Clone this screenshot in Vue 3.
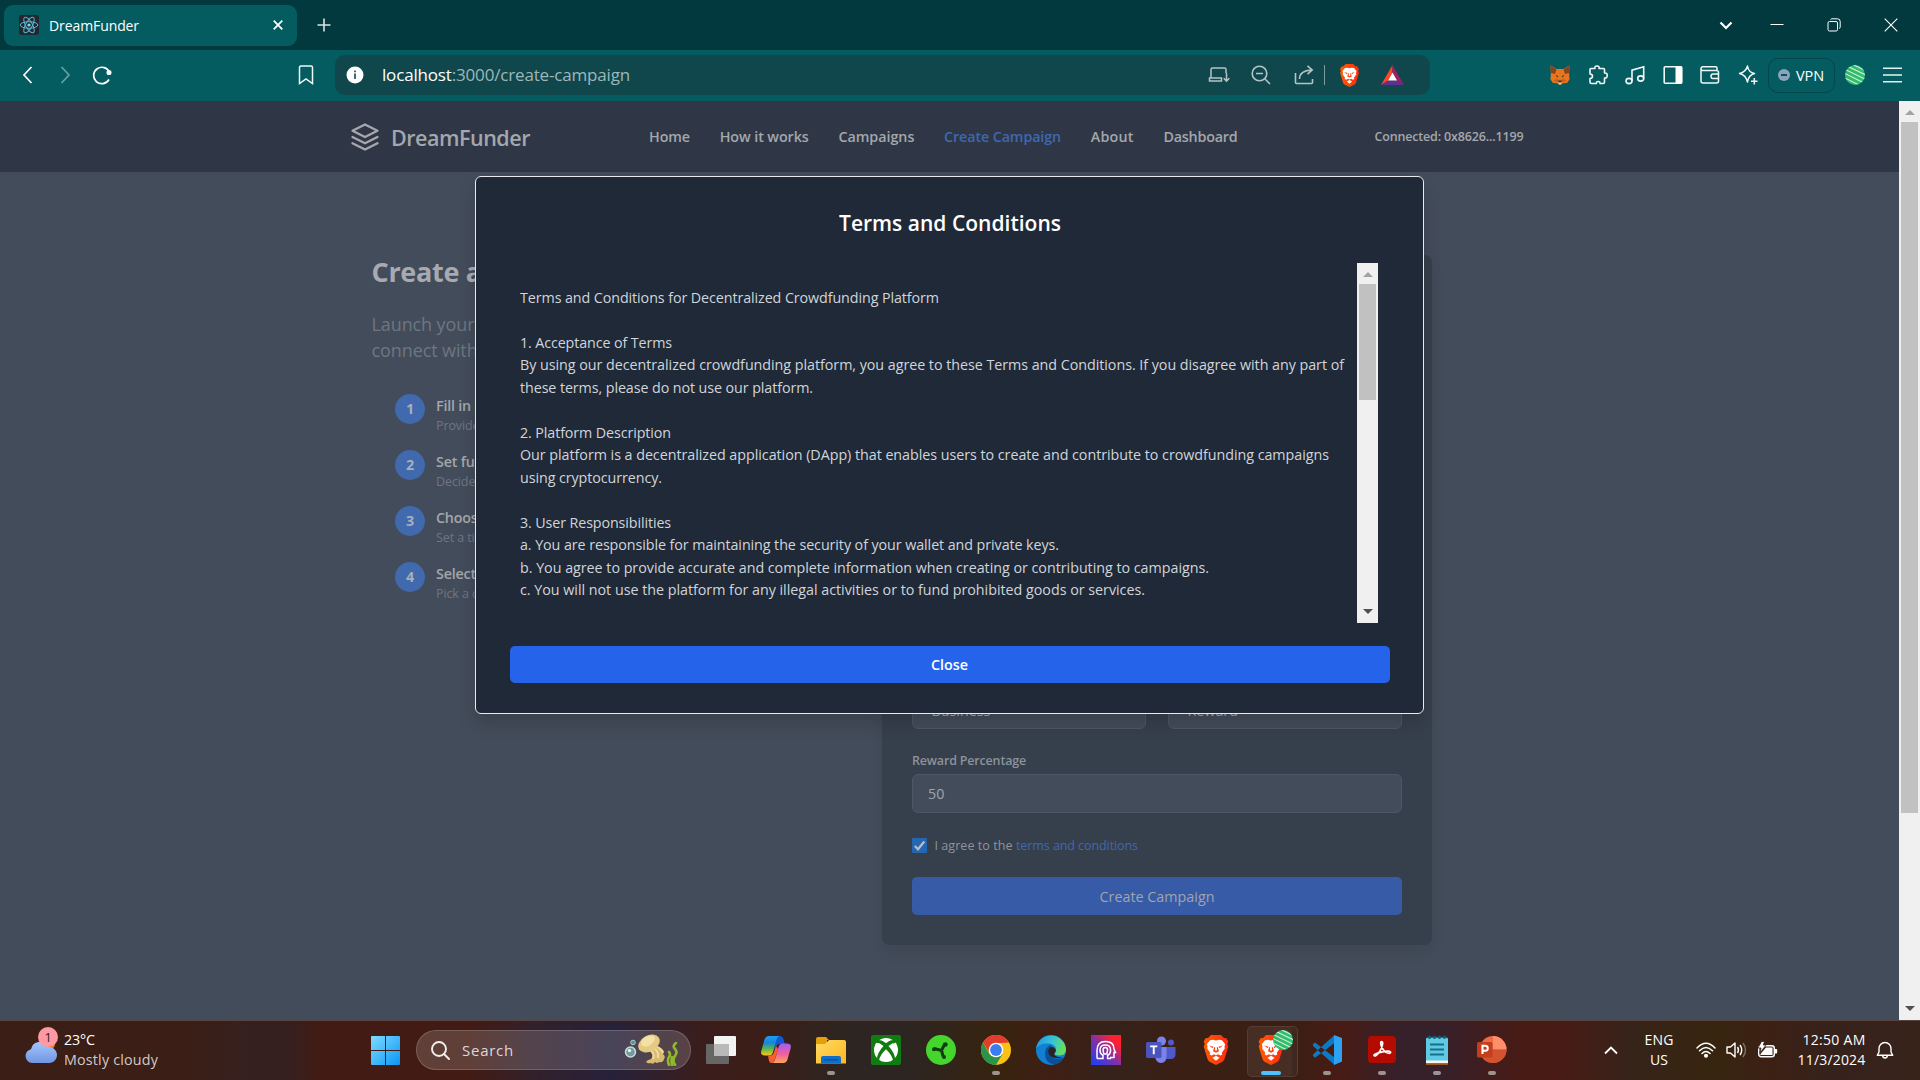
<script setup>
// Spreads the letters of a line so that it fills the given width.
const vFit = {
  mounted(el, { value }) {
    if (!value) return
    const natural = el.getBoundingClientRect().width
    el.style.letterSpacing = (value - natural) / el.textContent.length + 'px'
  }
}

const nav = [
  { label: 'Home', w: 41 },
  { label: 'How it works', w: 89 },
  { label: 'Campaigns', w: 76 },
  { label: 'Create Campaign', w: 117, active: true },
  { label: 'About', w: 43 },
  { label: 'Dashboard', w: 74 }
]

const steps = [
  { title: 'Fill in', sub: 'Provide' },
  { title: 'Set fun', sub: 'Decide' },
  { title: 'Choose', sub: 'Set a tim' },
  { title: 'Select', sub: 'Pick a c' }
]

const terms = [
  ['Terms and Conditions for Decentralized Crowdfunding Platform', 419],
  ['', 0],
  ['1. Acceptance of Terms', 152],
  ['By using our decentralized crowdfunding platform, you agree to these Terms and Conditions. If you disagree with any part of', 824],
  ['these terms, please do not use our platform.', 293],
  ['', 0],
  ['2. Platform Description', 151],
  ['Our platform is a decentralized application (DApp) that enables users to create and contribute to crowdfunding campaigns', 809],
  ['using cryptocurrency.', 142],
  ['', 0],
  ['3. User Responsibilities', 151],
  ['a. You are responsible for maintaining the security of your wallet and private keys.', 539],
  ['b. You agree to provide accurate and complete information when creating or contributing to campaigns.', 689],
  ['c. You will not use the platform for any illegal activities or to fund prohibited goods or services.', 625]
]

const apps = [
  { id: 'taskview' }, { id: 'copilot' }, { id: 'folder', run: true }, { id: 'xbox' },
  { id: 'razer' }, { id: 'chrome', run: true }, { id: 'edge' }, { id: 'mystic' },
  { id: 'teams' }, { id: 'brave' }, { id: 'brave', active: true }, { id: 'vscode', run: true },
  { id: 'acrobat', run: true }, { id: 'notepad', run: true }, { id: 'ppt', run: true }
]
</script>

<template>
  <div class="screen">
    <svg class="defs" width="0" height="0">
      <defs>
        <linearGradient id="gBrave" x1="0" x2="1"><stop offset="0" stop-color="#ff5a00" /><stop offset="1" stop-color="#ff2b12" /></linearGradient>
        <linearGradient id="gWin" x1="0" y1="0" x2="1" y2="1"><stop offset="0" stop-color="#7fdcff" /><stop offset="1" stop-color="#0a96f5" /></linearGradient>
        <linearGradient id="gCopA" x1="0" y1="0" x2="0" y2="1"><stop offset="0" stop-color="#1f9cf0" /><stop offset=".35" stop-color="#1486dc" /><stop offset=".65" stop-color="#58b64c" /><stop offset="1" stop-color="#ffc51c" /></linearGradient>
        <linearGradient id="gCopB" x1="0" y1="0" x2="0" y2="1"><stop offset="0" stop-color="#a05cf5" /><stop offset=".55" stop-color="#f0609a" /><stop offset="1" stop-color="#ffa45c" /></linearGradient>
        <linearGradient id="gFold" x1="0" y1="0" x2="1" y2="1"><stop offset="0" stop-color="#ffda64" /><stop offset="1" stop-color="#fdb81e" /></linearGradient>
        <linearGradient id="gMys" x1="0" y1="1" x2="1" y2="0"><stop offset="0" stop-color="#1440ff" /><stop offset=".5" stop-color="#8a2fa0" /><stop offset=".8" stop-color="#ff2030" /></linearGradient>
        <linearGradient id="gEdge" x1="0" y1=".3" x2="1" y2=".5"><stop offset="0" stop-color="#229bdc" /><stop offset=".5" stop-color="#34c1d8" /><stop offset="1" stop-color="#6ae05a" /></linearGradient>
        <linearGradient id="gCloud" x1="0" y1="0" x2="0" y2="1"><stop offset="0" stop-color="#a4c6fa" /><stop offset="1" stop-color="#7196e4" /></linearGradient>
        <linearGradient id="gBall" x1="0" x2="1"><stop offset="0" stop-color="#35b56a" /><stop offset="1" stop-color="#2fc46e" /></linearGradient>
        <clipPath id="cBall"><circle cx="10" cy="10" r="10" /></clipPath>
        <symbol id="i-brave" viewBox="0 0 30 30">
          <path fill="url(#gBrave)" d="M10 0h10l3 3 2.500.3 1.800 3.400-1 2.300 1 2.500-3.800 12.500q-.6 1.700-2 2.700L15 30l-6.500-3.300q-1.400-1-2-2.700L2.700 11.500l1-2.500-1-2.300 1.800-3.400L7 3z" />
          <path fill="#fff" d="M15 5.500l3-.7 3 .4 3.200 4-.7 2.300.3 2.100-3 4.200.5 1.700-2 1-2.200-1.200-2.100 1-2.100-1-2.200 1.200-2-1 .5-1.700-3-4.200.3-2.100-.7-2.300 3.200-4 3-.4z" />
          <path fill="#fff" d="M15 20.800l3.500 1.900L15 25.800l-3.500-3.100z" />
          <path fill="#ff4314" d="M8 10.500l4.500 1.200-.8 1.600zM22 10.500l-4.500 1.200.8 1.600zM15 17.700l-3-1.500 1.300-4.200.9.200L14 15.600h2l-.2-3.400.9-.2 1.300 4.200z" />
        </symbol>
        <symbol id="i-ball" viewBox="0 0 20 20">
          <circle cx="10" cy="10" r="10" fill="url(#gBall)" />
          <g clip-path="url(#cBall)" stroke="#d5f3dd" stroke-width="1.100"><path d="M5-2l18 9M2 1l20 9.500M0 4.500l20 9.500M-1 8l20 10M-2 12l18 9" /></g>
        </symbol>
        <symbol id="i-taskview" viewBox="0 0 30 30"><rect x="0" y="9" width="23" height="20" rx="1" fill="#666" /><rect x="8" y="1" width="22" height="20" rx="1" fill="#f3f3f3" /><path d="M8 9h15v12H8z" fill="#b9b9b9" /></symbol>
        <symbol id="i-copilot" viewBox="0 0 30 30">
          <path fill="#1457d6" d="M14 1h5q2.500 0 3.200 2.500L24 9h-5q-3 0-4 3l-1.500 4z" />
          <path fill="url(#gCopA)" d="M8 1h11q-2.500 0-3.500 3.500L12 17q-1 3.500-4 3.500H4Q-.8 20.500.3 16L3.500 4.500Q4.600 1 8 1z" />
          <path fill="#f4602c" d="M7 20.500h2q3 0 4-3.500l2-6 2 3-3 10q-1.200 4-3.500 4-2 0-2.600-2.500z" />
          <path fill="url(#gCopB)" d="M22 28H10.500q2.500 0 3.500-3.500L17.500 12q1-3.500 4-3.500H26q4.800 0 3.700 4.500L26.500 24.500Q25.400 28 22 28z" />
        </symbol>
        <symbol id="i-folder" viewBox="0 0 30 30"><path fill="#e3a008" d="M0 4q0-2 2-2h8l3 3h-2v5H0z" /><path fill="url(#gFold)" d="M0 9h9l4-4h15q2 0 2 2v21.500H0z" /><path fill="#0f6fc8" d="M5 28.500V23q0-2 2-2h16q2 0 2 2v5.500z" /><path stroke="#0a4c92" stroke-width="1.200" d="M8 24.800h14" /></symbol>
        <symbol id="i-xbox" viewBox="0 0 30 30"><rect width="30" height="30" rx="2" fill="#107c10" /><circle cx="15" cy="15" r="12" fill="#fff" /><path fill="#107c10" d="M6.800 5.200Q10 4.500 15 8.200q5-3.700 8.200-3L25 7l-2 1.500-1.500-.2-4 2.700q6 6.500 6.700 13.200L22 25.500Q21 20 15 14.300 9 20 8 25.500l-2.200-1.300Q6.500 17.500 12.500 11l-4-2.700L5.500 8 5 7z" /></symbol>
        <symbol id="i-razer" viewBox="0 0 30 30"><circle cx="15" cy="15" r="15" fill="#44d62c" /><path d="M15.500 15.500l3.500-7M15.500 15.500L8 13.500M15.500 15.500l1.700 6" stroke="#133d10" stroke-width="3" /><circle cx="19.500" cy="9.500" r="2.200" fill="#133d10" /><circle cx="8" cy="14.300" r="2" fill="#133d10" /><circle cx="18" cy="22" r="2" fill="#133d10" /></symbol>
        <symbol id="i-chrome" viewBox="0 0 30 30"><circle cx="15" cy="15" r="15" fill="#fbc116" /><path fill="#e33b2e" d="M2 7.500A15 15 0 0 1 28 7.500L15 8.200l-6.300 10z" /><path fill="#2a9447" d="M2 7.500A15 15 0 0 0 15 30l6.500-11-13 .2z" /><circle cx="15" cy="15" r="7.300" fill="#fff" /><circle cx="15" cy="15" r="5.900" fill="#3b7ded" /></symbol>
        <symbol id="i-edge" viewBox="0 0 30 30"><circle cx="15" cy="15" r="15" fill="#117fd3" /><path fill="url(#gEdge)" d="M.2 13.500A15 15 0 0 1 30 14q0 6.500-6.500 6.500-5 0-5-2.200 1.500-1.300 1.500-3.300 0-5.500-7-6.500Q4 7.800.2 13.500z" /><path fill="#0b4f99" d="M15 10q-6 2-6 9 0 9 9 10.600 6.500-1.300 9.800-7.100-11 4-14-3.500-1-4.500 3-5.500z" /><path fill="#2c211d" d="M15.500 12q-4 1.500-3 6 1 3.500 5.500 4.800 5 1 9.300-1-3.500.5-6.800-.4-3-1-2-3.200 1.700-1.300 1.200-3.400-1-2.800-4.200-2.800z" /></symbol>
        <symbol id="i-mystic" viewBox="0 0 30 30"><path fill="url(#gMys)" d="M0 0h30v30H0z" /><g fill="none" stroke="#fff" stroke-width="1.500"><path d="M6 23.500v-8Q6 6.500 14.500 6.500T23 14l1.500 3.500H23v5h-4" /><path d="M9 23.500h3v-3q-3-1.700-3-5.300 0-5.200 5.300-5.200t5.300 5.200q0 3.600-3 5.300v3h3.500M6 23.500h3" /><path d="M14.300 12.500q-2.300 0-2.300 2.500l.8 4h3l.8-4q0-2.500-2.300-2.500z" /></g></symbol>
        <symbol id="i-teams" viewBox="0 0 30 30"><circle cx="15.500" cy="6" r="4.500" fill="#7b83eb" /><circle cx="25" cy="7.500" r="3" fill="#5059c9" /><path fill="#5059c9" d="M20 12h9.500v7q0 5-5 5H20z" /><path fill="#7b83eb" d="M9 12h11.500v9q0 7-5.500 7T9 20z" /><rect x="0" y="7" width="15.500" height="16" rx="1.500" fill="#4b53bc" /><path stroke="#fff" stroke-width="1.900" d="M4.200 11.400h7.100M7.750 11.400v7.800" /></symbol>
        <symbol id="i-vscode" viewBox="0 0 30 30"><path fill="#0a7ac4" d="M1 9l2-1.500 19 14.500 .5 8L1 11zM1 19.500v1.500l2 1.800L22.500 8V0L1 19.500z" /><path fill="#2ba3f0" d="M22 0l8 3v23.500L22 30z" /></symbol>
        <symbol id="i-acrobat" viewBox="0 0 30 30"><rect x="1" y="1" width="28" height="27" rx="4" fill="#b30b00" /><path fill="none" stroke="#fff" stroke-width="1.700" d="M7 20.500c-1-2 15-6 16.500-3.500 1 2-4 2-7-2S13 6.500 14.700 6.500c2 0 .5 6-1.700 9.500S8 22 7 20.500z" /></symbol>
        <symbol id="i-notepad" viewBox="0 0 30 30"><rect x="4" y="2.500" width="22" height="25" rx="1.500" fill="#5fcbe2" /><path fill="#f5f5f5" d="M4 25.500h22v2.500H4z" /><path fill="#b8660f" d="M4 28h22v1.800H4z" /><path stroke="#1a6f8c" stroke-width="1.900" d="M8 9.500h14M8 14.500h14M8 19.500h14" /><g fill="#0f5f7c"><circle cx="7.500" cy="2.200" r="1.700" /><circle cx="12.500" cy="2.200" r="1.700" /><circle cx="17.500" cy="2.200" r="1.700" /><circle cx="22.500" cy="2.200" r="1.700" /></g></symbol>
        <symbol id="i-ppt" viewBox="0 0 30 30"><circle cx="16" cy="14.500" r="13.500" fill="#ed6c47" /><path fill="#ff8f6b" d="M16 1a13.500 13.500 0 0 1 13.500 13.500H16z" /><path fill="#d35230" d="M29.500 14.500a13.500 13.500 0 0 1-27 0z" /><rect x="0" y="7" width="15.500" height="15.500" rx="1.500" fill="#c43e1c" /><path fill="none" stroke="#fff" stroke-width="2" d="M5.500 19v-8.200h2.800a2.500 2.500 0 0 1 0 5H5.500" /></symbol>
      </defs>
    </svg>

    <!-- Browser title bar -->
    <div class="titlebar">
      <div class="tab">
        <svg class="favicon" width="20" height="20" viewBox="0 0 20 20"><rect width="20" height="20" rx="2.500" fill="#23272f" /><g fill="none" stroke="#58b9d3" stroke-width="1"><ellipse cx="10" cy="10" rx="8.800" ry="3.300" /><ellipse cx="10" cy="10" rx="8.800" ry="3.300" transform="rotate(60 10 10)" /><ellipse cx="10" cy="10" rx="8.800" ry="3.300" transform="rotate(120 10 10)" /></g><circle cx="10" cy="10" r="1.600" fill="#7bdcf2" /></svg>
        <span class="tabname" v-fit="90">DreamFunder</span>
        <svg width="10" height="10" viewBox="0 0 10 10" stroke="#fff" stroke-width="1.700"><path d="M.7.7l8.600 8.600M9.300.7L.7 9.300" /></svg>
      </div>
      <svg class="plus" width="14" height="14" viewBox="0 0 14 14" stroke="#d9e4e5" stroke-width="1.600"><path d="M7 .5v13M.5 7h13" /></svg>
      <div class="winctl">
        <svg width="14" height="14" viewBox="0 0 14 14" fill="none" stroke="#fff" stroke-width="2.200"><path d="M1.500 4.500L7 10l5.500-5.500" /></svg>
        <svg width="14" height="14" viewBox="0 0 14 14" stroke="#fff" stroke-width="1"><path d="M.5 6.500h13" /></svg>
        <svg width="14" height="14" viewBox="0 0 14 14" fill="none" stroke="#fff" stroke-width="1"><rect x="1" y="3.500" width="9.500" height="9.500" rx="1.500" /><path d="M3.500 1.500Q4 .8 5 .8h5.500q2.700 0 2.700 2.700V9q0 1-1 1.500" /></svg>
        <svg width="14" height="14" viewBox="0 0 14 14" stroke="#fff" stroke-width="1.100"><path d="M.7.700l12.600 12.600M13.300.7L.7 13.300" /></svg>
      </div>
    </div>

    <!-- Browser toolbar -->
    <div class="toolbar">
      <div class="navs">
        <svg width="12" height="18" viewBox="0 0 12 18" fill="none" stroke="#fff" stroke-width="1.700"><path d="M9.500 1L2 9l7.500 8" /></svg>
        <svg width="12" height="18" viewBox="0 0 12 18" fill="none" stroke="#6ba0a3" stroke-width="1.700"><path d="M2.500 1L10 9l-7.500 8" /></svg>
        <svg width="20" height="20" viewBox="0 0 20 20" fill="none" stroke="#fff" stroke-width="1.700"><path d="M17.500 7.500A8.200 8.200 0 1 0 17 14.500" /><circle cx="17" cy="7.500" r="1.700" fill="#fff" /></svg>
      </div>
      <svg class="bm" width="16" height="20" viewBox="0 0 16 20" fill="none" stroke="#f2f7f7" stroke-width="1.500"><path d="M1.500 2.500q0-1.500 1.500-1.500h10q1.500 0 1.500 1.500V18.500L8 14l-6.500 4.500z" /></svg>
      <div class="urlbar">
        <svg width="18" height="18" viewBox="0 0 18 18"><circle cx="9" cy="9" r="8.500" fill="#fff" /><path d="M9 7.500V13M9 4.500V6.300" stroke="#10474c" stroke-width="1.600" /></svg>
        <span class="url" v-fit="248"><b>localhost</b>:3000/create-campaign</span>
        <div class="urlicons">
          <svg width="22" height="20" viewBox="0 0 22 20" fill="none" stroke="#b3c4c6" stroke-width="1.500"><path d="M3 12.500V4.500Q3 3 4.500 3h12Q18 3 18 4.500V8M1.500 13h12v3h-12zM18.500 8v8M15.700 13.200l2.800 2.900 2.800-2.900" /></svg>
          <svg width="20" height="20" viewBox="0 0 20 20" fill="none" stroke="#b3c4c6" stroke-width="1.600"><circle cx="8.500" cy="8.500" r="7.300" /><path d="M14 14l5 5M5 8.500h7" /></svg>
          <svg width="20" height="20" viewBox="0 0 20 20" fill="none" stroke="#b3c4c6" stroke-width="1.600"><path d="M1.500 8v9.500q0 1 1 1h15q1 0 1-1V14M5.500 14q0-8.500 12.500-9M13.500.8L18.200 5l-4.700 4.200" /></svg>
          <i class="sep"></i>
          <svg width="23" height="23"><use href="#i-brave" /></svg>
          <svg width="23" height="20" viewBox="0 0 23 20"><path fill="#ff4724" d="M11.500 0L0 20l7-4.500 4.500-8z" /><path fill="#9e1f63" d="M11.500 0L23 20l-7-4.500-4.500-8z" /><path fill="#662d91" d="M0 20h23l-7-4.500H7z" /><path fill="#fff" d="M11.500 7.500L16 15.500H7z" /></svg>
        </div>
      </div>
      <div class="ext">
        <svg width="20" height="20" viewBox="0 0 20 20"><path fill="#e8761c" d="M.5.500l6 3.500h7l6-3.500-.4 8 .4 6-2.500 3.500-4.500.3-1 1.200h-3l-1-1.200-4.500-.3L.5 14.500l.4-6z" /><path fill="#8a4320" d="M.5.500l6 4L5 9 1 8zM19.500.5l-6 4L15 9l4-1z" /><path fill="#c95e14" d="M4 15l4-1 1 2-4 1zM16 15l-4-1-1 2 4 1z" /><path fill="#2c3a45" d="M5.500 10l2.700 1-.7 1.500zM14.500 10l-2.700 1 .7 1.500zM8.500 15.500h3l.5 2H8z" /><path fill="#d9c3ae" d="M8 17.500h4l-.8 2H8.800z" /></svg>
        <svg width="20" height="20" viewBox="0 0 20 20" fill="none" stroke="#eff7f7" stroke-width="1.600" stroke-linejoin="round"><path d="M2 4.500q0-1 1-1h4Q6.200 1 9 1t2 2.500h4.500q1 0 1 1V8Q19.200 7.500 19.200 10.500T16.500 13v4q0 1.500-1.500 1.500h-3q.3-2-1.800-2T8.400 18.500H3.500Q2 18.500 2 17v-3.500q2.500 0 2.500-2.200T2 9z" /></svg>
        <svg width="20" height="20" viewBox="0 0 20 20" fill="none" stroke="#eff7f7" stroke-width="1.600"><ellipse cx="4" cy="16" rx="3" ry="2.600" /><ellipse cx="15.700" cy="13.500" rx="3" ry="2.600" /><path d="M7 16V5.200l11.700-3.500v11.800" /></svg>
        <svg width="20" height="20" viewBox="0 0 20 20"><rect x="1.200" y="1.800" width="17.600" height="16.400" rx="1" fill="none" stroke="#eff7f7" stroke-width="1.600" /><path fill="#fff" d="M12.500 1.500H19v17h-6.500z" /></svg>
        <svg width="20" height="20" viewBox="0 0 20 20" fill="none" stroke="#eff7f7" stroke-width="1.500"><path d="M17 5.500V3q0-1.200-1.200-1.200H3Q1 1.800 1 3.700V16q0 2 2 2h13.500q2 0 2-2V7.500q0-2-2-2H3Q1 5.500 1 3.700M18.500 9H13q-2 0-2 2.300t2 2.300h5.500" /></svg>
        <svg width="20" height="20" viewBox="0 0 20 20" fill="none" stroke="#eff7f7" stroke-width="1.500" stroke-linejoin="round"><path d="M9.500 1q1 6.500 7 7.500-6 1.500-7 8.500-1.500-7-8-8.500 6.500-1.500 8-7.500z" /><path d="M16.300 13v6.500M13 16.200h6.500" /></svg>
      </div>
      <div class="vpn"><i></i><span v-fit="28">VPN</span></div>
      <svg class="ball" width="20" height="20"><use href="#i-ball" /></svg>
      <svg width="19" height="16" viewBox="0 0 19 16" stroke="#e6f2f2" stroke-width="1.500"><path d="M0 1.200h19M0 8h19M0 14.800h19" /></svg>
    </div>

    <!-- Web page -->
    <div class="viewport">
      <div class="page">
        <header class="header">
          <svg width="30" height="30" viewBox="0 0 24 24" fill="none" stroke="#a6a8ad" stroke-width="1.800" stroke-linecap="round" stroke-linejoin="round"><path d="M12 2L2 7l10 5 10-5-10-5zM2 17l10 5 10-5M2 12l10 5 10-5" /></svg>
          <span class="brand" v-fit="139">DreamFunder</span>
          <nav class="nav">
            <a v-for="n in nav" :key="n.label" :class="{ on: n.active }"><span v-fit="n.w">{{ n.label }}</span></a>
          </nav>
          <span class="wallet" v-fit="149">Connected: 0x8626...1199</span>
        </header>

        <main class="main">
          <section class="intro">
            <h1>Create a</h1>
            <p>Launch your<br />connect with</p>
            <ul>
              <li v-for="(s, i) in steps" :key="s.title">
                <span class="num">{{ i + 1 }}</span>
                <div><b>{{ s.title }}</b><small>{{ s.sub }}</small></div>
              </li>
            </ul>
          </section>
          <form class="card">
            <div class="pair"><div class="field">Business</div><div class="field">Reward</div></div>
            <label><span v-fit="114">Reward Percentage</span></label>
            <div class="field">50</div>
            <div class="agree">
              <svg width="15" height="15" viewBox="0 0 15 15"><rect width="15" height="15" rx="1" fill="#2566b2" /><path d="M2.800 8l3.200 3.200 6.300-7.600" fill="none" stroke="#b5bcc6" stroke-width="2.300" /></svg>
              <span v-fit="78">I agree to the</span>
              <a v-fit="122">terms and conditions</a>
            </div>
            <div class="submit"><span v-fit="115">Create Campaign</span></div>
          </form>
        </main>

        <div class="modal">
          <h2><span v-fit="222">Terms and Conditions</span></h2>
          <div class="scrollbox">
            <div class="terms">
              <p v-for="(t, i) in terms" :key="i"><span v-fit="t[1]">{{ t[0] }}</span></p>
            </div>
            <div class="sb"><i class="up"></i><i class="thumb"></i><i class="down"></i></div>
          </div>
          <div class="close"><span v-fit="37">Close</span></div>
        </div>
      </div>
      <div class="sb"><i class="up"></i><i class="thumb"></i><i class="down"></i></div>
    </div>

    <!-- Taskbar -->
    <div class="taskbar">
      <div class="weather">
        <svg width="34" height="40" viewBox="0 0 34 40"><circle cx="25" cy="17" r="6" fill="#f57c1c" /><path fill="url(#gCloud)" d="M8 36a7 7 0 0 1-1-13.800A9 9 0 0 1 24 20a8 8 0 0 1 2 16z" /><circle cx="24" cy="10" r="10" fill="#ff99a4" /><text x="24" y="15" text-anchor="middle">1</text></svg>
        <div><span class="deg" v-fit="31">23°C</span><span v-fit="94">Mostly cloudy</span></div>
      </div>
      <svg class="win" width="29" height="29" viewBox="0 0 29 29"><path fill="url(#gWin)" d="M1 0h13v14H0V1q0-1 1-1zM15 0h13q1 0 1 1v13H15zM0 15h14v14H1q-1 0-1-1zM15 15h14v13q0 1-1 1H15z" /></svg>
      <div class="search">
        <svg width="19" height="19" viewBox="0 0 19 19" fill="none" stroke="#f3eeee" stroke-width="1.900"><circle cx="8" cy="8" r="7" /><path d="M13 13l5 5" stroke-linecap="round" /></svg>
        <span v-fit="52">Search</span>
        <svg class="art" width="56" height="32" viewBox="0 0 56 32">
          <circle cx="6.500" cy="18" r="5" fill="#789a9f" stroke="#bfe0d8" stroke-width="1.500" /><circle cx="5.500" cy="16.500" r="1.600" fill="#e8ffff" /><circle cx="9" cy="8.500" r="2.300" fill="#608c94" stroke="#a9d0cc" />
          <path fill="#d9ba70" d="M26 16q5 6 1 9-4 1-5 3 2 2 5 1 2 2 4-1 2 2 4 0 4 1 5-3 2-2-1-5 2-4-2-5l-4-3z" /><path stroke="#f0dc9a" stroke-width="2" fill="none" d="M26 16q5 4 3 9M30 14q5 4 4 10M33 13q5 2 6 6" />
          <ellipse cx="25" cy="9.500" rx="11.500" ry="8" transform="rotate(-30 25 9.500)" fill="#e5ca83" /><ellipse cx="24" cy="7" rx="7.500" ry="4.500" transform="rotate(-30 24 7)" fill="#f3e1a8" />
          <path fill="none" stroke="#8eb92a" stroke-width="2.600" stroke-linecap="round" d="M45 31q-2-5 0-8t0-5M51 31q-3-5 0-9t0-7 1-6M48 31q-1-4 0-8" />
        </svg>
      </div>
      <div class="apps">
        <div v-for="(a, i) in apps" :key="i" class="app" :class="{ active: a.active, run: a.run }">
          <svg width="30" height="30"><use :href="'#i-' + a.id" /></svg>
          <svg v-if="a.active" class="mini" width="20" height="20"><use href="#i-ball" /></svg>
        </div>
      </div>
      <div class="tray">
        <svg class="chev" width="14" height="9" viewBox="0 0 14 9" fill="none" stroke="#fff" stroke-width="1.800"><path d="M1 7.500L7 1.500l6 6" /></svg>
        <div class="lang"><span v-fit="29">ENG</span><span v-fit="18">US</span></div>
        <svg class="wifi" width="20" height="16" viewBox="0 0 20 16" fill="none" stroke="#fff" stroke-width="1.500" stroke-linecap="round"><path d="M1 6q9-9.500 18 0M3.500 8.800q6.500-6.600 13 0M6 11.500q4-4 8 0" /><circle cx="10" cy="13.700" r="1.300" fill="#fff" /></svg>
        <svg class="vol" width="21" height="18" viewBox="0 0 21 18" fill="none" stroke="#fff" stroke-width="1.400" stroke-linejoin="round"><path d="M1 6h3.500L9 2v14l-4.500-4H1zM11.500 6q2 3 0 6M14 4q3.500 5 0 10" /><path stroke="#7b7067" d="M17 2q5 7 0 14" /></svg>
        <svg width="21" height="18" viewBox="0 0 21 18"><rect x="1.700" y="4.700" width="15.600" height="11" rx="2.500" fill="none" stroke="#fff" stroke-width="1.400" /><path fill="#fff" d="M9 6.500h6.500v7.500H3.500V13zM18 8h1.200q1 0 1 1v2.500q0 1-1 1H18z" /><path fill="#fff" stroke="#33231a" stroke-width=".8" d="M4.500.5h3L6.300 4H9l-6 8 1-5H1z" /></svg>
        <div class="clock"><span v-fit="63">12:50 AM</span><span v-fit="68">11/3/2024</span></div>
        <svg width="18" height="20" viewBox="0 0 18 20" fill="none" stroke="#fff" stroke-width="1.400" stroke-linejoin="round"><path d="M3 8.500a6 6 0 0 1 12 0V12l1.700 3.300H1.300L3 12zM6.500 15.500q.5 2.500 2.500 2.500t2.500-2.500" /></svg>
      </div>
    </div>
  </div>
</template>

<style>
body { margin: 0; overflow: hidden; }
</style>

<style scoped>
* { box-sizing: border-box; }
.screen { width: 1920px; height: 1080px; display: flex; flex-direction: column; overflow: hidden; font-family: "Open Sans", "Noto Sans", sans-serif; font-size: 14.3px; color: #fff; }
.defs { position: absolute; }
svg { flex: none; display: block; }
span, a { white-space: nowrap; }

.titlebar { height: 50px; flex: none; background: #02393e; display: flex; align-items: center; padding-left: 4px; }
.tab { width: 293px; height: 41px; border-radius: 9px; background: #045c61; display: flex; align-items: center; padding: 0 14px 0 15px; }
.tabname { font-size: 14px; margin: 0 auto 0 10px; }
.plus { margin-left: 20px; }
.winctl { margin-left: auto; display: flex; gap: 43px; padding-right: 22px; }
.winctl svg:first-child { margin-right: -6px; }

.toolbar { height: 51px; flex: none; background: #045c61; display: flex; align-items: center; padding-bottom: 1px; }
.navs { display: flex; align-items: center; width: 298px; padding-left: 22px; gap: 25px; }
.navs svg:last-child { margin-left: -4px; }
.bm { margin-right: 21px; }
.urlbar { width: 1095px; height: 40px; border-radius: 10px; background: #10474c; display: flex; align-items: center; padding-left: 11px; }
.url { font-size: 17px; color: #9eb7b9; margin-left: 18px; margin-top: -1px; }
.url b { font-weight: 400; color: #fff; }
.urlicons { margin-left: auto; margin-right: 26px; display: flex; align-items: center; }
.urlicons svg:nth-child(1) { margin-right: 21px; }
.urlicons svg:nth-child(2) { margin-right: 23px; }
.urlicons svg:nth-child(3) { margin-right: 10px; }
.urlicons svg:nth-child(5) { margin-right: 20px; }
.sep { width: 1px; height: 20px; background: #7e9b9e; margin-right: 13px; }
.ext { display: flex; gap: 17.500px; margin-left: 120px; }
.vpn { width: 67px; height: 35px; border: 1px solid #02464b; border-radius: 10px; margin: 0 10px; display: flex; align-items: center; justify-content: center; gap: 6px; font-size: 14.500px; }
.vpn i { width: 12px; height: 12px; border-radius: 50%; background: #8ba2bb; display: flex; align-items: center; justify-content: center; }
.vpn i::after { content: ""; width: 6px; height: 2px; background: #0d5359; }
.ball { margin-right: 18px; }

.viewport { height: 919px; flex: none; display: flex; }
.page { flex: 1; position: relative; background: #434c5a; overflow: hidden; }
.sb { width: 21px; flex: none; background: #f0f0f0; display: flex; flex-direction: column; align-items: center; }
.sb i { flex: none; }
.up { border: 5px solid transparent; border-top: 0; border-bottom: 5px solid #a3a3a3; margin: 9px 0 7px; }
.thumb { width: 17px; height: 691px; background: #c1c1c1; }
.down { border: 5px solid transparent; border-bottom: 0; border-top: 5px solid #505050; margin: auto 0 9px; }

.header { height: 71px; background: #2f3746; display: flex; align-items: center; padding-left: 350px; color: #a4a7ac; font-weight: 600; }
.brand { font-size: 21.500px; margin-left: 11px; margin-top: 1px; }
.nav { display: flex; gap: 29.700px; margin-left: 119px; font-size: 14.300px; }
.nav .on { color: #3e68b2; }
.wallet { font-size: 12.500px; margin-left: 137px; }

.main { display: flex; align-items: flex-start; padding-left: 371.500px; }
.intro { width: 510.500px; padding-top: 80px; }
h1 { margin: 0; font-size: 27px; line-height: 40px; font-weight: 700; color: #a7aab0; white-space: nowrap; letter-spacing: -.3px; }
.intro p { margin: 19px 0 0; font-size: 18px; line-height: 26.250px; color: #6e7682; letter-spacing: -.1px; white-space: nowrap; }
ul { list-style: none; margin: 30px 0 0; padding: 0 0 0 23.500px; }
li { display: flex; height: 56px; gap: 11px; }
.num { width: 30px; height: 30px; border-radius: 50%; background: #4069ae; color: #a9aeb8; font-weight: 700; display: flex; align-items: center; justify-content: center; }
li b { display: block; font-weight: 600; line-height: 22px; color: #a4a7ac; letter-spacing: -.2px; padding-top: 1px; }
li small { display: block; font-size: 12.500px; line-height: 17px; color: #6e7682; letter-spacing: -.1px; }
li div { white-space: nowrap; }

.card { width: 550px; height: 690px; margin-top: 83px; background: #363f4c; border-radius: 8px; padding: 30px; display: flex; flex-direction: column; justify-content: flex-end; color: #a0a4ab; box-shadow: 0 8px 14px rgba(0, 0, 0, .07); }
.pair { display: grid; grid-template-columns: 1fr 1fr; gap: 22px; }
.field { height: 39px; border: 1px solid #4e5765; border-radius: 6px; background: #434c5a; padding: 0 15px; display: flex; align-items: center; color: #a0a4ab; }
.pair .field { padding: 2px 0 0 18.500px; }
label { font-size: 12.500px; font-weight: 600; line-height: 20px; margin: 22px 0 3px; color: #8d929b; }
.agree { display: flex; align-items: center; height: 20px; margin: 22px 0; font-size: 12.600px; color: #8d929b; }
.agree span { margin-left: 7.500px; }
.agree a { margin-left: 3.500px; color: #4069ae; }
.submit { height: 38px; border-radius: 5px; background: #385ba8; display: flex; align-items: center; justify-content: center; }

.modal { position: absolute; left: 475px; top: 75px; width: 949px; height: 538px; background: #1f2937; border: 1px solid #e8eaec; border-radius: 6px; padding: 0 33px 0 34px; box-shadow: 0 10px 18px rgba(0, 0, 0, .14); }
h2 { margin: 31px 0 24px; line-height: 31px; font-size: 21px; font-weight: 600; text-align: center; }
.scrollbox { display: flex; height: 360px; margin: 0 12px 23px 10px; overflow: hidden; }
.terms { flex: 1; padding-top: 23.500px; color: #d1d5db; overflow: hidden; }
.terms p { margin: 0; height: 22.500px; line-height: 22.500px; white-space: nowrap; }
.scrollbox .thumb { height: 116px; }
.close { height: 37px; border-radius: 5px; background: #2563eb; font-weight: 600; display: flex; align-items: center; justify-content: center; padding-right: 1px; }

.taskbar { height: 60px; flex: none; position: relative; border-top: 1px solid #55443f; display: flex; align-items: center; background: linear-gradient(90deg, #3b1e15 0, #3b1e15 180px, #36201f 250px, #36201f 290px, #421b14 320px, #421b14 470px, #33202a 530px, #26213a 610px, #3a1e1d 700px, #3c1d17 750px, #2d2521 850px, #2d2521 910px, #37230f 1000px, #3f1f14 1050px, #35221b 1110px, #3a1f14 1180px, #3a1f14 1290px, #481b15 1340px, #36202a 1400px, #36202a 1440px, #481b15 1520px, #481b15 1560px, #36231a 1630px, #36250f 1710px, #3c2014 1770px, #36221c 1830px, #36231a 1920px); padding-bottom: 1px; }
.weather { width: 346px; padding-left: 24px; display: flex; align-items: center; gap: 6px; }
.weather > svg { margin-top: -7px; }
.weather text { font-family: "Open Sans", sans-serif; font-size: 13.500px; fill: #3d1d1c; }
.weather div { display: flex; flex-direction: column; align-items: flex-start; line-height: 20px; color: #d2c9c7; margin-top: -1px; }
.weather .deg { color: #fff; }
.win { margin-left: 25px; }
.search { width: 275px; height: 40px; margin-left: 16px; border-radius: 20px; border: 1px solid rgba(255, 255, 255, .17); background: rgba(255, 255, 255, .16); display: flex; align-items: center; padding: 0 10px 0 14px; color: #ddd6d8; font-size: 15px; }
.search span { margin: -1px 0 0 12px; }
.art { margin-left: auto; }
.apps { display: flex; margin-left: 2.500px; }
.app { width: 55.050px; height: 59px; display: flex; align-items: center; justify-content: center; position: relative; }
.app.active::before { content: ""; position: absolute; left: 3px; top: 5px; width: 49px; height: 49px; border-radius: 5px; background: rgba(255, 255, 255, .07); border: 1px solid rgba(255, 255, 255, .07); box-shadow: inset -5px 0 0 rgba(0, 0, 0, .12); }
.app.run::after, .app.active::after { content: ""; position: absolute; bottom: 5px; width: 8px; height: 4px; border-radius: 2px; background: #9d9491; }
.app.active::after { width: 20px; background: #4cc2ff; }
.app svg { position: relative; }
.app .mini { position: absolute; right: 6.500px; top: 9px; }
.tray { margin-left: auto; display: flex; align-items: center; line-height: 20px; padding-right: 26px; font-size: 14px; }
.lang, .clock { display: flex; flex-direction: column; margin-top: -1px !important; }
.lang { align-items: center; margin: 0 22px 0 27px; }
.wifi, .vol { margin-right: 10px; }
.clock { align-items: flex-end; margin: 0 10.500px 0 20px; }
</style>
